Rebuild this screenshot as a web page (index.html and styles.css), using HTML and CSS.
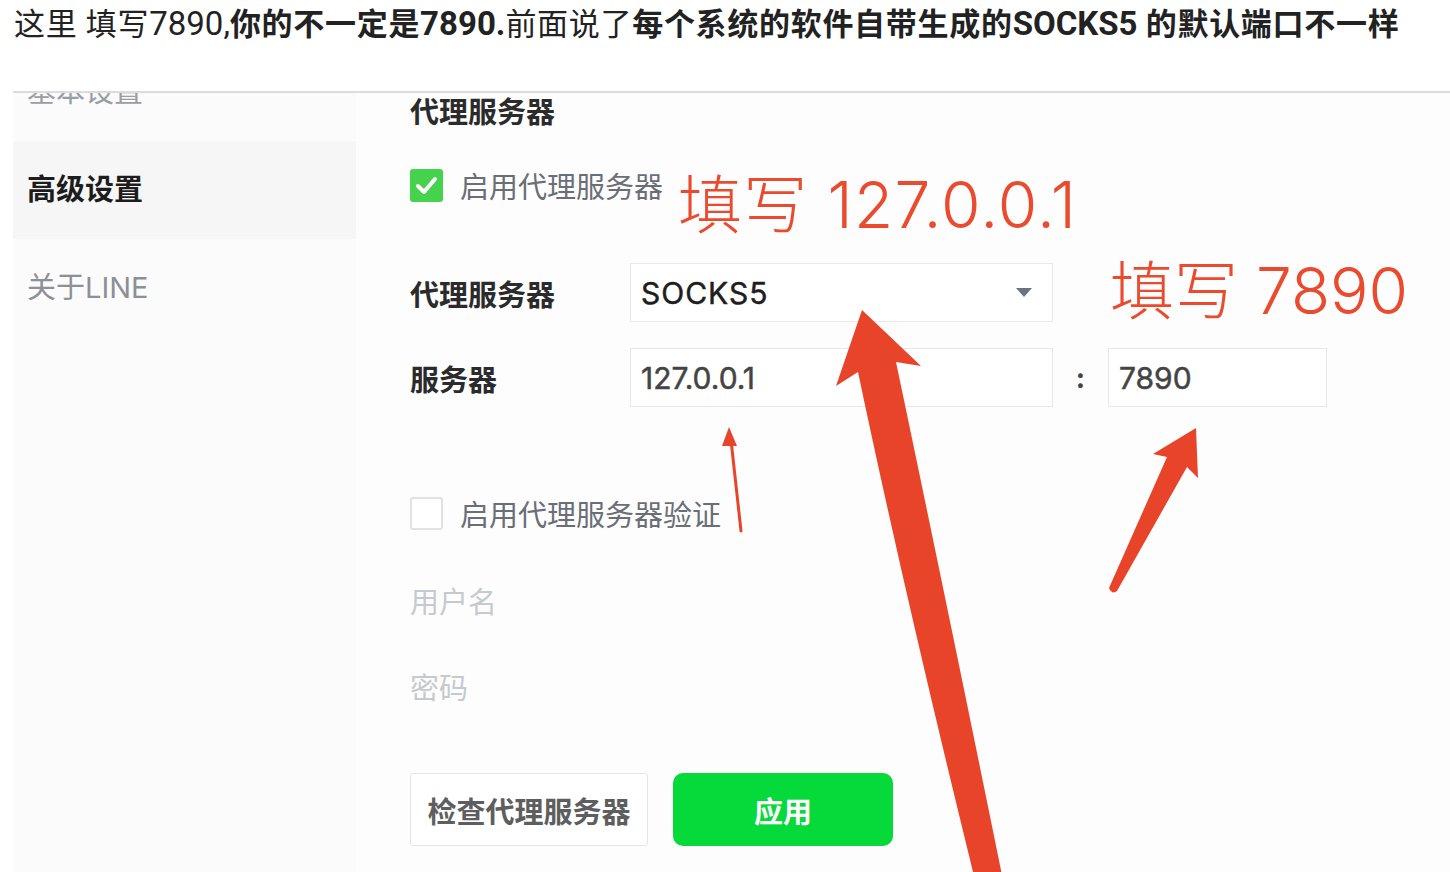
FILE: index.html
```html
<!DOCTYPE html>
<html lang="zh-CN">
  <head>
    <meta charset="UTF-8" />
    <meta name="viewport" content="width=device-width, initial-scale=1.0" />
    <title>代理服务器设置</title>
    <link rel="stylesheet" href="styles.css">
  </head>
  <body>
    <p class="intro">这里 填写<span class="lat">7890,</span><b>你的不一定是<span class="lat">7890.</span></b>前面说了<b>每个系统的软件自带生成的<span class="lat">SOCKS5 </span>的默认端口不一样</b></p>

    <div class="shot">
      <aside class="side">
        <div class="nav-item cut">基本设置</div>
        <div class="nav-item active">高级设置</div>
        <div class="nav-item">关于LINE</div>
      </aside>

      <main class="panel">
        <h2>代理服务器</h2>

        <label class="check check-proxy">
          <span class="box on">
            <svg width="33" height="33" viewBox="0 0 33 33"><path d="M8 17 L14 23 L25 10" fill="none" stroke="#fff" stroke-width="4" stroke-linecap="round" stroke-linejoin="round"/></svg>
          </span>
          启用代理服务器
        </label>

        <div class="row row-type">
          <span class="row-label">代理服务器</span>
          <div class="field field-wide select">SOCKS5<span class="caret"></span></div>
        </div>

        <div class="row row-server">
          <span class="row-label">服务器</span>
          <div class="field field-wide value">127.0.0.1</div>
          <span class="colon">:</span>
          <div class="field field-port value">7890</div>
        </div>

        <label class="check check-auth">
          <span class="box"></span>
          启用代理服务器验证
        </label>

        <div class="hint hint-user">用户名</div>
        <div class="hint hint-pass">密码</div>

        <div class="actions">
          <button class="btn btn-check">检查代理服务器</button>
          <button class="btn btn-apply">应用</button>
        </div>
      </main>
    </div>

    <div class="note note-ip">填写 127.0.0.1</div>
    <div class="note note-port">填写 7890</div>

    <svg class="arrows" width="1450" height="872" viewBox="0 0 1450 872">
      <!-- big arrow to the type select -->
      <path d="M862 310 L921 366 L896 362 Q946 600 1003 880 L975 880 Q906 600 858 372 L836 386 Z" fill="#e8442a"/>
      <!-- thin arrow to the address -->
      <path d="M741 531 L731 440" stroke="#e8442a" stroke-width="3" stroke-linecap="round"/>
      <path d="M729 427 L737 446 L722 446 Z" fill="#e8442a"/>
      <!-- arrow to the port -->
      <path d="M1196 428 L1198 478 L1187 467 L1117 591 Q1112 595 1109 588 L1167 457 L1153 454 Z" fill="#e8442a"/>
    </svg>
  </body>
</html>
```

FILE: styles.css
```css
body {
  margin: 0;
  position: relative;
  font-family: Roboto, "Noto Sans CJK SC", sans-serif;
  background-color: #fff;
  overflow: hidden;
}
.intro {
  margin: 0;
  padding-left: 14px;
  font-size: 31px;
  line-height: 48px;
  letter-spacing: 0.7px;
  color: #222;
  white-space: nowrap;
}
.intro b {
  font-weight: 700;
}
.intro .lat {
  font-size: 33px;
  letter-spacing: 0;
}

.shot {
  display: flex;
  margin: 42px 0 0 13px;
  height: 780px;
  overflow: hidden;
  border-top: 2px solid #dcdcdc;
  background-color: #fdfdfd;
  font-family: Inter, "Noto Sans CJK SC", sans-serif;
}

.side {
  flex: none;
  width: 343px;
  background-color: #fbfbfb;
}
.nav-item {
  height: 98px;
  line-height: 98px;
  padding-left: 14px;
  font-size: 29px;
  color: #8c9097;
}
.nav-item.cut {
  margin-top: -50px;
  color: #9a9ea4;
}
.nav-item.active {
  background-color: #f6f6f7;
  color: #1d1d1d;
  font-weight: 700;
}

.panel {
  flex: 1;
  padding-left: 54px;
}
.panel h2 {
  margin: 0;
  font-size: 29px;
  line-height: 40px;
  font-weight: 700;
  color: #2b2b2b;
}

.check {
  display: flex;
  align-items: center;
  gap: 17px;
  height: 40px;
  font-size: 29px;
  color: #6a6e76;
}
.check-proxy {
  margin-top: 32px;
}
.check-auth {
  margin-top: 86px;
}
.box {
  display: block;
  box-sizing: border-box;
  width: 33px;
  height: 33px;
  border: 2px solid #e1e2e4;
  border-radius: 3px;
  background-color: #fff;
}
.box.on {
  border: none;
  background-color: #45d24d;
}
.box svg {
  display: block;
}

.row {
  display: flex;
  align-items: center;
  height: 59px;
}
.row-type {
  margin-top: 58px;
}
.row-server {
  margin-top: 26px;
}
.row-label {
  width: 220px;
  font-size: 29px;
  font-weight: 700;
  color: #2b2b2b;
}
.field {
  display: flex;
  align-items: center;
  box-sizing: border-box;
  height: 59px;
  padding-left: 10px;
  border: 1px solid #e7e8e9;
  background-color: #fff;
  font-size: 30px;
  -webkit-text-stroke: 0.5px currentColor;
}
.field-wide {
  width: 423px;
}
.field-port {
  width: 219px;
}
.select {
  justify-content: space-between;
  padding-right: 20px;
  color: #1e1e1e;
  letter-spacing: 1px;
}
.value {
  color: #444;
}
.caret {
  border-left: 8.5px solid transparent;
  border-right: 8.5px solid transparent;
  border-top: 9px solid #6c7380;
}
.colon {
  width: 55px;
  text-align: center;
  font-size: 28px;
  font-weight: 700;
  color: #444;
}

.hint {
  font-size: 29px;
  line-height: 40px;
  color: #c6c9ce;
}
.hint-user {
  margin-top: 50px;
}
.hint-pass {
  margin-top: 46px;
}

.actions {
  display: flex;
  gap: 25px;
  margin-top: 64px;
}
.btn {
  box-sizing: border-box;
  height: 73px;
  padding: 0;
  font-family: inherit;
  font-size: 29px;
  font-weight: 700;
  cursor: pointer;
}
.btn-check {
  width: 238px;
  border: 1px solid #e6e6e6;
  border-radius: 3px;
  background-color: #fff;
  color: #5e5e5e;
}
.btn-apply {
  width: 220px;
  border: none;
  border-radius: 10px;
  background-color: #06d93a;
  color: #fff;
}

.note {
  position: absolute;
  font-family: Inter, "Noto Sans CJK SC", sans-serif;
  font-size: 64px;
  font-weight: 300;
  line-height: 64px;
  color: #ea4a2d;
  white-space: nowrap;
}
.note-ip {
  left: 678px;
  top: 173px;
  letter-spacing: 1.2px;
}
.note-port {
  left: 1110px;
  top: 259px;
}

.arrows {
  position: absolute;
  left: 0;
  top: 0;
  pointer-events: none;
}
```
